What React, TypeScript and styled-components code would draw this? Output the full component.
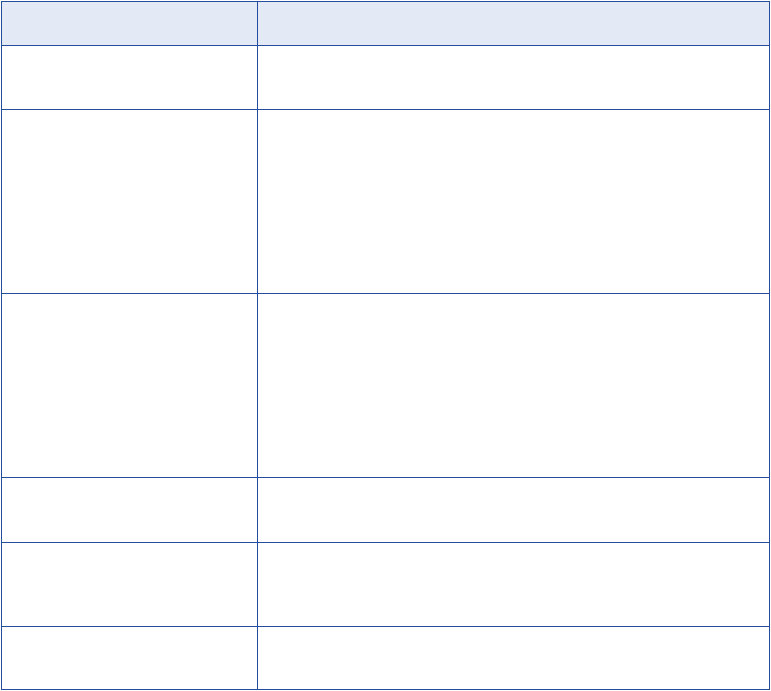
import { Fragment } from "react"
import styled, { createGlobalStyle } from "styled-components"

const GlobalStyle = createGlobalStyle`
	html, body {
		margin: 0;
		padding: 0;
		background: #ffffff;
		font-family: "Liberation Sans", Arial, sans-serif;
	}
`

const Page = styled.div`
	padding: 1px 0 0 1px;
`

const Table = styled.div`
	display: grid;
	width: 769px;
	grid-template-columns: 256px 512px;
	box-sizing: border-box;
	border-top: 1px solid #264c9f;
	border-left: 1px solid #264c9f;
`

const Cell = styled.div<{ $head?: boolean; $h: number }>`
	box-sizing: border-box;
	height: ${(p) => p.$h}px;
	border-right: 1px solid #264c9f;
	border-bottom: 1px solid #264c9f;
	background: ${(p) => (p.$head ? "#e4eaf5" : "#ffffff")};
	padding: 8px 10px;
	font-size: 13px;
	color: #222;
`

const rows = [64, 184, 184, 65, 84, 63]

export default function App() {
	return (
		<Page>
			<GlobalStyle />
			<Table>
				<Cell $head $h={44} />
				<Cell $head $h={44} />
				{rows.map((h, i) => (
					<Fragment key={i}>
						<Cell $h={h} />
						<Cell $h={h} />
					</Fragment>
				))}
			</Table>
		</Page>
	)
}
